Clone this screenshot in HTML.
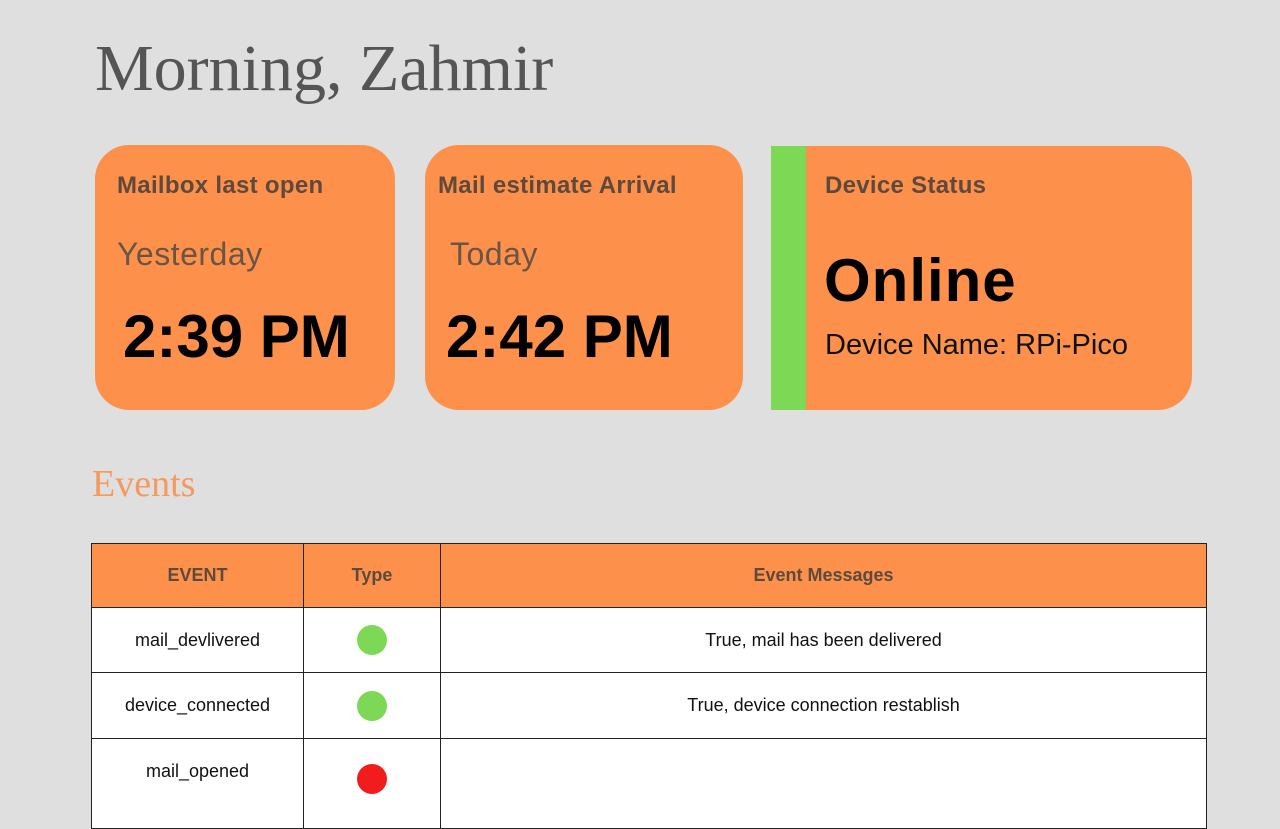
<!DOCTYPE html>
<html><head><style>
body{margin:0;width:1280px;height:800px;background:#dfdfdf;position:relative;overflow:hidden;font-family:"Liberation Sans",sans-serif}
.a{position:absolute}
h1{position:absolute;left:95px;top:31px;margin:0;font-family:"Liberation Serif",serif;font-weight:normal;font-size:66px;color:#555;letter-spacing:0px}
.card{position:absolute;background:#fd914c;border-radius:34px;top:145px;height:265px}
.t{position:absolute;font-weight:bold;font-size:24px;color:#5e4a3c;letter-spacing:0.3px}
.s{position:absolute;font-size:32px;color:#6a5444;letter-spacing:0.5px}
.b{position:absolute;font-weight:bold;font-size:60px;color:#000}
table{position:absolute;left:91px;top:543px;width:1116px;border-collapse:collapse;font-size:18px;table-layout:fixed}
td,th{border:1px solid #222;text-align:center;padding:0}
th{background:#fd914c;height:63px;font-weight:bold;color:#5e4a3c;font-size:18px}
td{background:#fff;height:64px;color:#111}
.d{display:inline-block;width:30px;height:30px;border-radius:50%;vertical-align:middle}
</style></head><body>
<h1>Morning, Zahmir</h1>
<div class="card" style="left:95px;width:300px"></div>
<div class="t" style="left:117px;top:172px">Mailbox last open</div>
<div class="s" style="left:117px;top:236px">Yesterday</div>
<div class="b" style="left:123px;top:302px">2:39 PM</div>
<div class="card" style="left:425px;width:318px"></div>
<div class="t" style="left:438px;top:172px">Mail estimate Arrival</div>
<div class="s" style="left:450px;top:236px">Today</div>
<div class="b" style="left:446px;top:302px">2:42 PM</div>
<div class="card" style="left:771px;width:421px;border-radius:0 34px 34px 0;top:146px;height:264px"></div>
<div class="a" style="left:771px;top:146px;width:35px;height:264px;background:#7dd856"></div>
<div class="t" style="left:825px;top:172px">Device Status</div>
<div class="b" style="left:824px;top:246px;letter-spacing:1px">Online</div>
<div class="a" style="left:825px;top:329px;font-size:29px;color:#111">Device Name: RPi-Pico</div>
<div class="a" style="left:92px;top:462px;font-family:'Liberation Serif',serif;font-size:38px;color:#f59a5e">Events</div>
<table>
<colgroup><col style="width:212px"><col style="width:137px"><col></colgroup>
<tr><th>EVENT</th><th>Type</th><th>Event Messages</th></tr>
<tr><td>mail_devlivered</td><td><span class="d" style="background:#7dd856"></span></td><td>True, mail has been delivered</td></tr>
<tr><td style="height:65px">device_connected</td><td><span class="d" style="background:#7dd856"></span></td><td>True, device connection restablish</td></tr>
<tr><td style="vertical-align:top;padding-top:22px">mail_opened</td><td style="vertical-align:top;padding-top:25px"><span class="d" style="background:#f21c1c"></span></td><td></td></tr>
</table>
</body></html>
